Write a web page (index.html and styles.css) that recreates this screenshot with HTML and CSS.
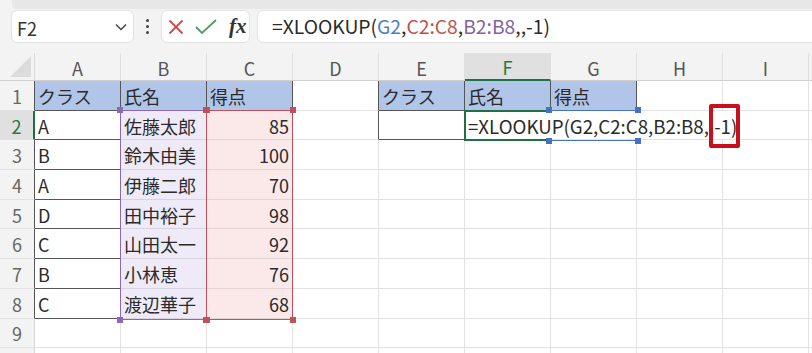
FILE: index.html
```html
<!DOCTYPE html>
<html lang="ja">
<head>
  <meta charset="UTF-8" />
  <title>XLOOKUP</title>
  <link rel="stylesheet" href="styles.css">
</head>
<body>
  <div class="ribbon"></div>
  <div class="toolbar">
    <div class="namebox">
      <span>F2</span>
      <svg class="chev" width="12" height="8" viewBox="0 0 12 8"><polyline points="1,1.5 6,6.5 11,1.5" fill="none" stroke="#444" stroke-width="1.5"/></svg>
    </div>
    <div class="dots"><i></i><i></i><i></i></div>
    <div class="fxbox">
      <svg width="16" height="16" viewBox="0 0 16 16"><path d="M1.5 1.5 L14.5 14.5 M14.5 1.5 L1.5 14.5" stroke="#d24a4a" stroke-width="1.8" fill="none"/></svg>
      <svg width="22" height="16" viewBox="0 0 22 16"><polyline points="1,8 7,14 21,1" fill="none" stroke="#4c9d62" stroke-width="1.8"/></svg>
      <span class="fx">fx</span>
    </div>
    <div class="formula">=XLOOKUP(<span class="r-blue">G2</span>,<span class="r-red">C2:C8</span>,<span class="r-purple">B2:B8</span>,,-1)</div>
  </div>

  <div class="sheet">
    <div class="cells">
      <div class="corner"></div>
      <div class="ch">A</div><div class="ch">B</div><div class="ch">C</div><div class="ch">D</div><div class="ch">E</div>
      <div class="ch sel">F</div><div class="ch">G</div><div class="ch">H</div><div class="ch">I</div><div class="ch"></div>

      <div class="rh dr">1</div>
      <div class="c hd dr db">クラス</div><div class="c hd dr db">氏名</div><div class="c hd dr db">得点</div><div class="c dr"></div>
      <div class="c hd dr db">クラス</div><div class="c hd dr db">氏名</div><div class="c hd dr db">得点</div><div class="c"></div><div class="c"></div><div class="c"></div>

      <div class="rh sel">2</div>
      <div class="c dr db">A</div><div class="c pb">佐藤太郎</div><div class="c pr num">85</div><div class="c dr"></div>
      <div class="c dr db"></div>
      <div class="c nr"><span class="ftext">=XLOOKUP(G2,C2:C8,B2:B8,<span class="mark">,-1)</span></span></div>
      <div class="c nr"></div><div class="c nr"></div><div class="c"></div><div class="c"></div>

      <div class="rh dr">3</div>
      <div class="c dr db">B</div><div class="c pb">鈴木由美</div><div class="c pr num">100</div>
      <div class="c"></div><div class="c"></div><div class="c"></div><div class="c"></div><div class="c"></div><div class="c"></div><div class="c"></div>

      <div class="rh dr">4</div>
      <div class="c dr db">A</div><div class="c pb">伊藤二郎</div><div class="c pr num">70</div>
      <div class="c"></div><div class="c"></div><div class="c"></div><div class="c"></div><div class="c"></div><div class="c"></div><div class="c"></div>

      <div class="rh dr">5</div>
      <div class="c dr db">D</div><div class="c pb">田中裕子</div><div class="c pr num">98</div>
      <div class="c"></div><div class="c"></div><div class="c"></div><div class="c"></div><div class="c"></div><div class="c"></div><div class="c"></div>

      <div class="rh dr">6</div>
      <div class="c dr db">C</div><div class="c pb">山田太一</div><div class="c pr num">92</div>
      <div class="c"></div><div class="c"></div><div class="c"></div><div class="c"></div><div class="c"></div><div class="c"></div><div class="c"></div>

      <div class="rh dr">7</div>
      <div class="c dr db">B</div><div class="c pb">小林恵</div><div class="c pr num">76</div>
      <div class="c"></div><div class="c"></div><div class="c"></div><div class="c"></div><div class="c"></div><div class="c"></div><div class="c"></div>

      <div class="rh dr">8</div>
      <div class="c dr db">C</div><div class="c pb">渡辺華子</div><div class="c pr num">68</div>
      <div class="c"></div><div class="c"></div><div class="c"></div><div class="c"></div><div class="c"></div><div class="c"></div><div class="c"></div>

      <div class="rh">9</div>
      <div class="c"></div><div class="c"></div><div class="c"></div><div class="c"></div><div class="c"></div><div class="c"></div><div class="c"></div><div class="c"></div><div class="c"></div><div class="c"></div>

      <div class="rh"></div>
      <div class="c"></div><div class="c"></div><div class="c"></div><div class="c"></div><div class="c"></div><div class="c"></div><div class="c"></div><div class="c"></div><div class="c"></div><div class="c"></div>
    </div>

    <div class="marks">
      <div class="rng purple"><i class="h tl"></i><i class="h tr"></i><i class="h bl"></i><i class="h br"></i></div>
      <div class="rng red"><i class="h tl"></i><i class="h tr"></i><i class="h bl"></i><i class="h br"></i></div>
      <div class="rng blue"><i class="h tl"></i><i class="h tr"></i><i class="h bl"></i><i class="h br"></i></div>
      <div class="active"></div>
    </div>
  </div>
</body>
</html>
```

FILE: styles.css
```css
* {
  box-sizing: border-box;
}
html, body {
  margin: 0;
  padding: 0;
  height: 353px;
  overflow: hidden;
  background: #f3f3f3;
  font-family: "Noto Sans CJK JP", "Noto Sans", sans-serif;
  color: #222;
}

.ribbon {
  height: 9px;
  margin-left: 12px;
  background: #e7e7e7;
  border-bottom-left-radius: 4px;
}

.toolbar {
  display: flex;
  align-items: center;
  height: 44px;
  padding: 1px 0 10px 11px;
}

.namebox,
.fxbox,
.formula {
  height: 33px;
  background: #fff;
  border: 1px solid #e2e2e2;
  border-radius: 6px;
}

.namebox {
  width: 123px;
  display: flex;
  align-items: center;
  justify-content: space-between;
  padding: 0 6px 0 5px;
  font-size: 18px;
  color: #333;
}

.namebox span {
  padding-top: 2px;
}

.dots {
  width: 27px;
  display: flex;
  flex-direction: column;
  align-items: center;
  gap: 2.5px;
}

.dots i {
  width: 3.5px;
  height: 3.5px;
  border-radius: 50%;
  background: #444;
}

.fxbox {
  width: 89px;
  display: flex;
  align-items: center;
  gap: 11px;
  padding-left: 6px;
}

.fx {
  font-family: "Liberation Serif", serif;
  font-style: italic;
  font-weight: bold;
  font-size: 21px;
  color: #333;
  margin-left: 1px;
}

.formula {
  flex: 1;
  margin-left: 7px;
  margin-right: -10px;
  padding: 1px 0 0 14px;
  font-size: 19.3px;
  line-height: 29px;
  color: #2a2a2a;
  white-space: nowrap;
}

.r-blue { color: #4a7ebd; }
.r-red { color: #c0504d; }
.r-purple { color: #8064a2; }

/* grid */
.sheet {
  display: grid;
  background: #fff;
}

.cells,
.marks {
  grid-area: 1 / 1;
  display: grid;
  grid-template-columns: 35px repeat(9, 86px) 1fr;
  grid-template-rows: 28px repeat(10, 29.7px);
}

.marks {
  pointer-events: none;
}

.corner {
  position: relative;
  background: #f3f3f3;
  border-right: 1px solid #dadada;
  border-bottom: 1px solid #d0d0d0;
}

.corner::after {
  content: '';
  position: absolute;
  right: 3px;
  bottom: 3px;
  width: 21px;
  height: 21px;
  background: #dcdcdc;
  clip-path: polygon(100% 0, 100% 100%, 0 100%);
}

.ch {
  display: flex;
  align-items: center;
  justify-content: center;
  background: #f3f3f3;
  border-right: 1px solid #e0e0e0;
  border-bottom: 1px solid #d0d0d0;
  font-size: 18px;
  color: #555;
  padding-top: 2px;
}

.ch.sel {
  background: #e0e0e0;
  color: #1e7a45;
  border-bottom: 2px solid #1e7145;
}

.rh {
  display: flex;
  align-items: center;
  justify-content: center;
  background: #f3f3f3;
  border-right: 1px solid #d6d6d6;
  border-bottom: 1px solid #e2e2e2;
  font-size: 18px;
  color: #666;
  padding-top: 1px;
}

.rh.dr {
  border-right-color: #555;
}

.rh.sel {
  background: #e0e0e0;
  color: #1e7a45;
  border-right: 2px solid #1e7145;
}

.c {
  display: flex;
  align-items: center;
  padding: 1px 3px 0;
  border-right: 1px solid #e2e2e2;
  border-bottom: 1px solid #e2e2e2;
  font-size: 18px;
  color: #2a2a2a;
  white-space: nowrap;
}

.c.dr { border-right-color: #555; }
.c.db { border-bottom-color: #555; }
.c.nr { border-right-color: transparent; }

.c.hd { background: #b1c5e8; }
.c.pb { background: #efeaf7; border-bottom-color: #d8d2e2; }
.c.pr { background: #fbe8e9; border-bottom-color: #e2d4d5; }
.c.num { justify-content: flex-end; }

.ftext {
  position: relative;
  z-index: 2;
  font-size: 18.7px;
}

.mark {
  position: relative;
}

.mark::after {
  content: '';
  position: absolute;
  left: 0;
  right: -3px;
  top: -8px;
  bottom: -9px;
  border: 4px solid #c8101c;
  border-radius: 2px;
}

/* range highlights */
.rng {
  position: relative;
  margin: -1px 0 -1px -1px;
  border: 1.5px solid currentColor;
}

.rng.purple {
  grid-column: 3;
  grid-row: 3 / 10;
  color: #8a68b6;
}

.rng.red {
  grid-column: 4;
  grid-row: 3 / 10;
  color: #c0505a;
}

.rng.blue {
  grid-column: 8;
  grid-row: 3;
  color: #4472c4;
  border-left: none;
  border-right: none;
}

.h {
  position: absolute;
  width: 6px;
  height: 6px;
  background: currentColor;
}

.h.tl { left: -4px; top: -4px; }
.h.tr { right: -4px; top: -4px; }
.h.bl { left: -4px; bottom: -4px; }
.h.br { right: -4px; bottom: -4px; }

.active {
  grid-column: 7;
  grid-row: 3;
  margin: -1px 0 -1px -1px;
  border: 2px solid #1e7145;
  border-right: none;
}
```
